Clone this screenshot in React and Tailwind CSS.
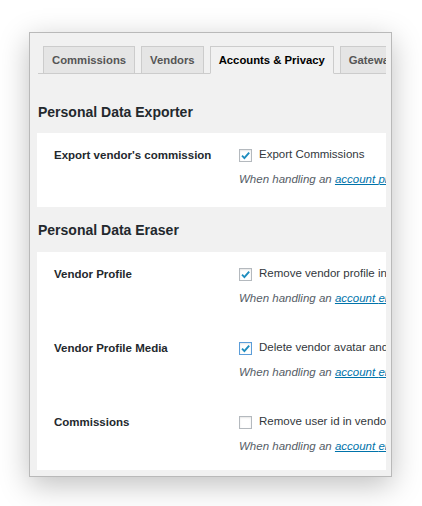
const font = { fontFamily: '"Liberation Sans", Arial, sans-serif' };

function Check({ checked, focus }) {
  return (
    <span
      className={`inline-flex h-[13px] w-[13px] shrink-0 items-center justify-center border bg-white ${
        focus ? "border-[#5b9dd9] shadow-[0_0_2px_rgba(30,140,190,0.8)]" : "border-[#b4b9be]"
      } shadow-[inset_0_1px_2px_rgba(0,0,0,0.1)]`}
    >
      {checked && (
        <svg viewBox="0 0 12 12" className="h-[11px] w-[11px]">
          <path d="M2.2 6.2 L4.8 8.8 L10 2.8" fill="none" stroke="#1e8cbe" strokeWidth="2.1" />
        </svg>
      )}
    </span>
  );
}

function Row({ label, text, checked, focus, kind }) {
  return (
    <div className="flex h-[74px] pt-[13px]">
      <div className="w-[202px] shrink-0 pl-[17px] text-[11.5px] font-bold leading-[18px] text-[#23282d]">
        {label}
      </div>
      <div className="min-w-0 flex-1 whitespace-nowrap">
        <div className="flex h-[18px] items-center gap-[7px] text-[11.5px] text-[#32373c]">
          <Check checked={checked} focus={focus} />
          <span>{text}</span>
        </div>
        <div className="mt-[6px] text-[11.5px] italic leading-[18px] text-[#555d66]">
          When handling an{" "}
          <span className="text-[#0073aa] underline">account {kind} request</span>, this data will be affected.
        </div>
      </div>
    </div>
  );
}

const tabs = ["Commissions", "Vendors", "Accounts & Privacy", "Gateways", "Advanced"];

export default function App() {
  return (
    <div className="h-[506px] w-[422px] bg-white pl-[29px] pt-[32px]" style={font}>
      <div className="flex h-[445px] w-[363px] border border-[#b9b9b9] bg-[#f1f1f1] pb-[6px] pl-[7px] pr-[5px] pt-[13px] shadow-[0_8px_28px_rgba(0,0,0,0.25)]">
        <div className="w-full overflow-hidden">
          <div className="ml-px flex gap-[6px] border-b border-[#ccc] pl-[5px]">
            {tabs.map((t) => {
              const active = t === "Accounts & Privacy";
              return (
                <div
                  key={t}
                  className={`-mb-px flex h-[28px] shrink-0 items-center whitespace-nowrap border px-[8px] text-[11.3px] font-bold ${
                    active
                      ? "border-[#ccc] border-b-[#f1f1f1] bg-[#f1f1f1] text-black"
                      : "border-[#ccc] bg-[#e5e5e5] text-[#555]"
                  }`}
                >
                  {t}
                </div>
              );
            })}
          </div>

          <h2 className="ml-px mt-[28px] text-[14px] font-bold leading-[20px] text-[#23282d]">
            Personal Data Exporter
          </h2>
          <div className="mt-[11px] bg-white">
            <Row label="Export vendor's commission" text="Export Commissions" checked kind="privacy" />
          </div>

          <h2 className="ml-px mt-[13px] text-[14px] font-bold leading-[20px] text-[#23282d]">
            Personal Data Eraser
          </h2>
          <div className="mt-[12px] bg-white">
            <Row label="Vendor Profile" text="Remove vendor profile information" checked kind="erasure" />
            <Row label="Vendor Profile Media" text="Delete vendor avatar and banner" checked focus kind="erasure" />
            <Row label="Commissions" text="Remove user id in vendor commissions" kind="erasure" />
          </div>
        </div>
      </div>
    </div>
  );
}
